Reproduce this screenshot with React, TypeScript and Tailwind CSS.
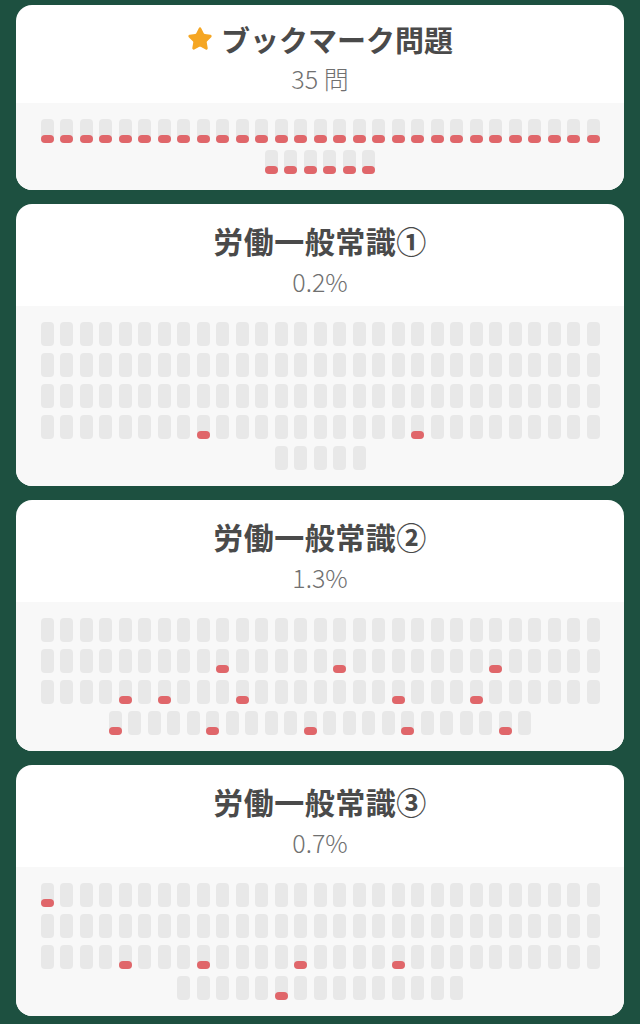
import React from "react";
import { Star } from "lucide-react";

type Deck = {
  title: string;
  sub: string;
  total: number;
  wrong: number[] | "all";
  star?: boolean;
  tight?: boolean;
};

const decks: Deck[] = [
  { title: "ブックマーク問題", sub: "35 問", total: 35, wrong: "all", star: true, tight: true },
  { title: "労働一般常識①", sub: "0.2%", total: 121, wrong: [95, 106] },
  {
    title: "労働一般常識②",
    sub: "1.3%",
    total: 109,
    wrong: [38, 44, 52, 62, 64, 68, 76, 80, 87, 92, 97, 102, 107],
  },
  { title: "労働一般常識③", sub: "0.7%", total: 102, wrong: [0, 62, 66, 71, 76, 92] },
];

function Bar({ red }: { red: boolean }) {
  return (
    <div className="relative w-[13px] h-[24px] rounded-[4px] bg-[#e8e8e8]">
      {red && <div className="absolute bottom-0 left-0 right-0 h-[8px] rounded-[4px] bg-[#e0666a]" />}
    </div>
  );
}

function DeckCard({ deck }: { deck: Deck }) {
  const bars = Array.from({ length: deck.total }, (_, i) =>
    deck.wrong === "all" ? true : deck.wrong.includes(i)
  );
  return (
    <div className="bg-white rounded-2xl overflow-hidden">
      <div
        className={
          deck.tight
            ? "flex flex-col items-center pt-[16px] pb-[10px] gap-[6px]"
            : "flex flex-col items-center pt-[18px] pb-[10px] gap-[8px]"
        }
      >
        <div className="flex items-center gap-2 h-[36px]">
          {deck.star && <Star className="w-[26px] h-[26px] text-[#f5a623]" fill="#f5a623" strokeWidth={1.5} />}
          <span
            className={
              deck.star
                ? "text-[29px] leading-[36px] font-semibold text-[#4a4a4a]"
                : "text-[30px] leading-[36px] font-semibold tracking-[0.5px] text-[#4a4a4a]"
            }
          >
            {deck.title}
          </span>
        </div>
        <div className="text-[25px] leading-[30px] font-light text-[#707070]">{deck.sub}</div>
      </div>
      <div className="bg-[#f8f8f8] px-6 pt-4 pb-4">
        <div className="flex flex-wrap justify-center gap-x-[6.5px] gap-y-[7px]">
          {bars.map((r, i) => (
            <Bar key={i} red={r} />
          ))}
        </div>
      </div>
    </div>
  );
}

export default function App() {
  return (
    <div
      className="min-h-[1024px] bg-[#1d5040] px-4 pt-[5px] pb-4 flex flex-col gap-[14px]"
      style={{ fontFamily: '"Noto Sans CJK JP", "Noto Sans", sans-serif' }}
    >
      {decks.map((d) => (
        <DeckCard key={d.title} deck={d} />
      ))}
    </div>
  );
}
